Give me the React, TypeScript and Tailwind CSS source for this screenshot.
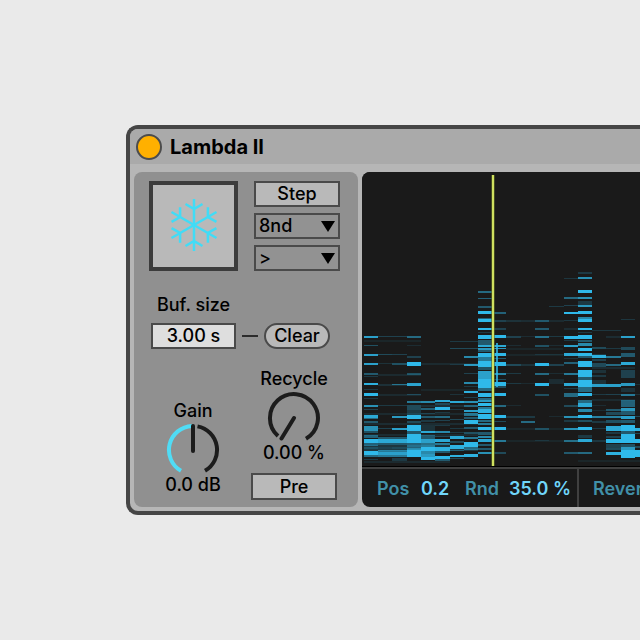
import type { ReactNode } from "react";

/* Left edges of the analysis frames, one per spectrogram column. */
const COLS = [364, 378, 392, 407, 421, 435, 450, 464, 478, 492, 506, 521, 535, 549, 564, 578, 592, 606, 621, 635, 650];

/* Per column: [top, height, intensity] */
type Bin = [number, number, number];
const BINS: Bin[][] = [
  [[336, 2, 0.85], [345, 1, 0.35], [354, 2, 0.85], [363, 2, 0.85], [373, 2, 0.4], [376, 1, 0.2], [383, 2, 0.95], [389, 1, 0.2], [393, 3, 1], [398, 1, 0.2], [405, 2, 0.75], [409, 1, 0.25], [415, 3, 0.9], [418, 1, 0.5], [421, 2, 0.4], [426, 5, 0.75], [431, 2, 0.35], [435, 3, 0.45], [439, 4, 1], [443, 3, 0.45], [447, 2, 0.35], [451, 4, 1], [455, 2, 0.5], [459, 1, 0.2]],
  [[336, 1, 0.25], [354, 1, 0.3], [363, 1, 0.15], [405, 1, 0.2], [428, 1, 0.25], [437, 2, 0.4], [439, 4, 0.9], [443, 2, 0.4], [447, 2, 0.25], [450, 2, 0.6], [452, 3, 0.85], [455, 2, 0.6]],
  [[336, 1, 0.25], [354, 1, 0.25], [363, 2, 0.35], [384, 1, 0.5], [405, 1, 0.2], [416, 2, 0.8], [428, 2, 0.85], [437, 2, 0.4], [439, 4, 0.9], [443, 2, 0.4], [447, 2, 0.3], [450, 2, 0.6], [452, 3, 0.85], [455, 2, 0.6], [458, 3, 0.2]],
  [[336, 2, 0.5], [345, 1, 0.12], [356, 2, 0.25], [362, 4, 1], [373, 2, 0.35], [383, 3, 0.85], [394, 1, 0.25], [401, 2, 0.6], [405, 5, 0.3], [410, 5, 0.2], [415, 4, 1], [421, 2, 0.3], [425, 6, 1], [431, 3, 0.4], [434, 9, 1], [443, 5, 0.45], [448, 2, 0.7], [450, 7, 1]],
  [[401, 2, 0.7], [408, 2, 0.45], [413, 1, 0.2], [416, 2, 0.4], [420, 2, 0.2], [425, 6, 0.15], [431, 2, 0.9], [435, 4, 0.4], [439, 4, 0.85], [443, 4, 0.55], [447, 4, 1], [451, 3, 0.7], [454, 3, 0.8], [457, 3, 1]],
  [[400, 2, 0.9], [403, 2, 0.3], [407, 3, 1], [412, 1, 0.2], [416, 2, 0.5], [420, 1, 0.25], [425, 1, 0.2], [431, 2, 0.7], [436, 1, 0.3], [439, 3, 0.9], [443, 2, 0.6], [447, 4, 0.95], [451, 2, 0.4], [456, 3, 1], [459, 2, 0.4]],
  [[341, 1, 0.2], [348, 1, 0.3], [364, 1, 0.12], [394, 1, 0.15], [401, 2, 0.9], [409, 1, 0.2], [419, 1, 0.3], [428, 1, 0.2], [432, 1, 0.2], [436, 3, 0.9], [441, 2, 0.3], [445, 4, 0.95], [450, 1, 0.3], [455, 2, 0.95], [458, 1, 0.3]],
  [[341, 1, 0.2], [348, 1, 0.3], [356, 2, 0.7], [364, 2, 0.8], [373, 1, 0.25], [382, 2, 0.7], [386, 1, 0.2], [391, 2, 0.95], [397, 1, 0.25], [401, 2, 0.75], [405, 2, 0.4], [410, 2, 0.85], [413, 3, 0.55], [417, 2, 0.4], [420, 4, 1], [427, 2, 0.4], [432, 2, 0.35], [437, 2, 0.6], [442, 5, 1], [447, 3, 0.5], [454, 3, 0.95]],
  [[291, 2, 0.5], [298, 1, 0.45], [306, 2, 0.4], [311, 3, 1], [318, 1, 0.45], [319, 3, 1], [328, 2, 1], [332, 1, 0.2], [335, 4, 1], [340, 5, 0.4], [345, 2, 0.9], [348, 2, 0.8], [350, 2, 0.4], [353, 4, 1], [357, 4, 0.6], [361, 6, 1], [367, 3, 0.35], [371, 8, 0.85], [379, 9, 1], [388, 3, 0.5], [393, 4, 1], [398, 2, 0.5], [400, 2, 0.8], [403, 3, 1], [407, 2, 0.6], [409, 4, 0.95], [414, 5, 1], [420, 2, 0.5], [423, 2, 0.6], [427, 3, 1], [432, 3, 0.4], [436, 2, 0.7], [439, 3, 0.9], [444, 2, 0.4], [448, 2, 0.4], [452, 2, 0.75]],
  [[312, 2, 0.45], [320, 2, 0.25], [328, 2, 0.25], [335, 3, 1], [345, 2, 0.9], [348, 1, 0.8], [353, 3, 1], [358, 1, 0.4], [362, 4, 1], [373, 2, 0.7], [379, 1, 0.3], [382, 4, 1], [386, 2, 0.3], [393, 3, 1], [405, 2, 0.5], [415, 3, 1], [421, 1, 0.3], [427, 3, 1], [440, 2, 0.6], [452, 2, 0.3]],
  [[320, 2, 0.15], [336, 2, 0.25], [345, 1, 0.12], [364, 2, 0.3], [373, 1, 0.2], [383, 1, 0.2], [405, 1, 0.1], [416, 2, 0.2]],
  [[320, 2, 0.12], [336, 1, 0.12], [364, 2, 0.15], [383, 1, 0.1], [416, 2, 0.2], [421, 2, 0.5]],
  [[320, 2, 0.4], [328, 2, 0.4], [336, 2, 0.55], [345, 2, 0.35], [354, 1, 0.12], [363, 3, 1], [373, 2, 0.5], [383, 3, 1], [394, 2, 0.35], [428, 2, 0.3], [440, 1, 0.12]],
  [[306, 1, 0.2], [320, 2, 0.1], [336, 1, 0.2], [345, 1, 0.12], [354, 1, 0.1], [364, 2, 0.25], [373, 1, 0.12], [379, 5, 0.12], [416, 1, 0.1]],
  [[278, 1, 0.18], [297, 2, 0.5], [305, 1, 0.25], [312, 2, 1], [320, 1, 0.18], [328, 2, 0.12], [336, 3, 1], [340, 1, 0.2], [345, 2, 0.85], [353, 3, 0.9], [358, 1, 0.15], [362, 2, 0.45], [373, 2, 0.6], [383, 3, 0.9], [388, 1, 0.2], [393, 4, 0.5], [405, 2, 0.3], [416, 2, 0.75], [420, 2, 0.2], [428, 2, 0.75], [440, 2, 0.5], [452, 2, 0.4]],
  [[272, 2, 0.2], [277, 2, 0.75], [290, 3, 1], [297, 2, 0.75], [301, 4, 0.2], [305, 2, 0.8], [311, 3, 1], [317, 2, 0.7], [319, 3, 1], [328, 2, 1], [332, 1, 0.2], [335, 4, 1], [340, 2, 0.4], [343, 3, 0.7], [348, 3, 1], [353, 3, 1], [356, 2, 0.4], [361, 6, 1], [370, 7, 1], [377, 3, 0.4], [380, 7, 1], [387, 5, 0.5], [393, 3, 1], [400, 3, 0.5], [403, 4, 0.9], [409, 3, 0.7], [415, 3, 1], [420, 2, 0.35], [427, 3, 1], [435, 3, 0.2], [439, 3, 0.9], [452, 2, 0.5]],
  [[330, 1, 0.18], [347, 2, 0.3], [354, 1, 0.18], [355, 3, 0.95], [359, 2, 0.25], [363, 4, 0.3], [370, 3, 0.15], [375, 2, 0.2], [380, 4, 0.15], [384, 3, 0.85], [394, 1, 0.2], [405, 1, 0.12], [410, 1, 0.12], [416, 2, 0.65], [421, 2, 0.2], [428, 1, 0.2]],
  [[330, 1, 0.18], [336, 2, 0.12], [348, 1, 0.2], [356, 2, 0.6], [364, 2, 0.5], [384, 3, 0.85], [394, 1, 0.25], [409, 2, 0.4], [412, 3, 0.3], [416, 2, 0.65], [420, 3, 0.35], [426, 5, 0.9], [432, 2, 0.2], [436, 2, 0.25], [439, 4, 1], [444, 4, 0.25], [448, 2, 0.3], [452, 3, 0.95]],
  [[319, 1, 0.18], [336, 2, 0.85], [347, 3, 0.3], [353, 4, 0.4], [362, 3, 0.9], [370, 8, 0.25], [383, 3, 0.8], [388, 4, 0.15], [394, 2, 0.6], [400, 7, 0.45], [408, 3, 0.8], [411, 4, 0.4], [416, 3, 0.85], [420, 3, 0.4], [425, 6, 1], [431, 3, 0.4], [434, 9, 1], [444, 3, 0.35], [447, 3, 0.8], [450, 8, 1]],
  [[384, 1, 0.15], [394, 1, 0.15], [416, 1, 0.3], [428, 3, 0.95], [433, 1, 0.3], [439, 4, 1], [446, 2, 0.3], [450, 7, 1]],
];

/* Faint residual energy that runs across several frames: [left, top, width, intensity] */
const RESIDUE: [number, number, number, number][] = [
  [364, 340, 57, 0.08], [378, 374, 43, 0.1], [378, 384, 43, 0.14], [378, 394, 43, 0.1],
  [364, 413, 114, 0.1], [364, 423, 114, 0.12], [364, 434, 114, 0.12], [364, 445, 114, 0.18],
  [364, 449, 114, 0.2], [364, 461, 86, 0.1], [421, 363, 57, 0.1], [421, 389, 57, 0.08],
  [421, 405, 57, 0.14], [506, 348, 57, 0.08], [506, 354, 57, 0.08], [506, 428, 72, 0.08],
  [506, 440, 72, 0.08], [592, 367, 43, 0.12], [592, 399, 43, 0.1], [592, 440, 14, 0.18], [578, 460, 62, 0.08],
];

function Spectrogram() {
  return (
    <svg viewBox="362 172 278 295" preserveAspectRatio="xMinYMin slice" className="block h-[295px] w-full bg-[#1a1a1a]" role="img" aria-label="Spectrogram">
      {RESIDUE.map(([x, y, w, o]) => (
        <rect key={`${x}-${y}`} x={x} y={y} width={w} height="2" fill="#2fb9ea" opacity={o} />
      ))}
      {BINS.map((bins, c) =>
        bins.map(([y, h, o]) => (
          <rect key={`${c}-${y}`} x={COLS[c]} y={y} width={COLS[c + 1] - COLS[c]} height={h} fill="#2fb9ea" opacity={o} />
        ))
      )}
      <rect x="496" y="343" width="2" height="44" fill="#2fb9ea" opacity="0.8" />
      <rect x="491" y="175" width="4" height="291" fill="#606a25" opacity="0.6" />
      <rect x="492" y="175" width="2" height="291" fill="#cfe160" />
      <rect x="362" y="466" width="278" height="1" fill="#000" />
    </svg>
  );
}

function Snowflake() {
  return (
    <svg width="48" height="54" viewBox="-24 -26 48 54" fill="none" stroke="#41dcf6" strokeWidth="2.500" aria-hidden="true">
      {[0, 60, 120, 180, 240, 300].map((a) => (
        <path key={a} transform={`rotate(${a})`} d="M0 0V-26M-8.500 -21L0 -16L8.500 -21" />
      ))}
    </svg>
  );
}

function Knob({ id, label, value, children }: { id: string; label: string; value: string; children: ReactNode }) {
  return (
    <div className="flex flex-col items-center">
      <label htmlFor={id} className="h-6 leading-6">{label}</label>
      <div className="relative h-[50px] w-[54px]">
        <svg width="54" height="50" viewBox="0 0 54 50" fill="none" strokeWidth="4" stroke="#1c1c1c" aria-hidden="true">
          {children}
        </svg>
        <input id={id} type="range" className="absolute inset-0 h-full w-full opacity-0" />
      </div>
      <output htmlFor={id} className="h-6 whitespace-nowrap leading-6">{value}</output>
    </div>
  );
}

function Menu({ label, options }: { label: string; options: string[] }) {
  return (
    <div className="relative">
      <select aria-label={label} className="block h-[26px] w-full appearance-none border-2 border-[#4a4a4a] bg-[#929292] pl-[3px] leading-5">
        {options.map((o) => <option key={o}>{o}</option>)}
      </select>
      <svg width="14" height="11" viewBox="0 0 14 11" className="pointer-events-none absolute right-[5px] top-2" aria-hidden="true">
        <path d="M0 0H14L7 11Z" fill="#000" />
      </svg>
    </div>
  );
}

function Field({ id, label, value, width }: { id: string; label: string; value: string; width: string }) {
  return (
    <div className="flex items-center gap-2">
      <label htmlFor={id} className="w-9 text-[#4190a8]">{label}</label>
      <input id={id} defaultValue={value} className={`${width} bg-transparent text-[#70d6fa]`} />
    </div>
  );
}

export default function App() {
  return (
    <main className="min-h-screen overflow-hidden bg-[#eaeaea] pl-[126px] pt-[125px] font-['Inter',sans-serif] text-lg font-medium text-black">
      <section className="overflow-hidden rounded-l-[12px] border-4 border-r-0 border-[#464646] bg-[#b6b6b6]">
        <header className="flex h-[35px] items-center gap-2 bg-[#aaaaaa] pl-[6px]">
          <button aria-label="Device on" className="size-[26px] rounded-full border-2 border-[#4c4c4c] bg-[#ffb000]" />
          <h1 className="text-xl font-bold">Lambda II</h1>
        </header>

        <div className="flex gap-1 pb-1 pl-1 pt-2">
          <div className="w-[224px] shrink-0 rounded-[8px] bg-[#909090] px-[15px] pb-[7px] pt-[9px]">
            <div className="flex gap-4">
              <button aria-label="Freeze" className="flex h-[90px] w-[89px] items-center justify-center border-4 border-[#3c3c3c] bg-[#b9b9b9]">
                <Snowflake />
              </button>
              <div className="flex w-[86px] flex-col gap-[6px]">
                <button className="h-[26px] border-2 border-[#4a4a4a] bg-[#b9b9b9] leading-5">Step</button>
                <Menu label="Step length" options={["8nd"]} />
                <Menu label="Direction" options={[">"]} />
              </div>
            </div>

            <label htmlFor="buffer" className="mt-[22px] block w-[89px] text-center leading-6">Buf. size</label>
            <div className="mt-[6px] flex items-center gap-[6px] pl-[2px]">
              <input id="buffer" defaultValue="3.00 s" className="h-[26px] w-[85px] border-2 border-[#4a4a4a] bg-[#dedede] text-center" />
              <span className="h-[2px] w-4 bg-[#2c2c2c]" />
              <button className="h-[26px] w-[66px] rounded-full border-2 border-[#4a4a4a] bg-[#b9b9b9] leading-5">Clear</button>
            </div>

            <div className="mt-[18px] flex gap-4">
              <div className="w-[88px] pt-8">
                <Knob id="gain" label="Gain" value="0.0 dB">
                  <path d="M15 47.800A24 24 0 0 1 26 3" stroke="#50dcf5" />
                  <path d="M31.500 3.400A24 24 0 0 1 39 47.800" />
                  <path d="M27 3V28" strokeLinecap="round" />
                </Knob>
              </div>
              <div className="flex w-[82px] flex-col items-center gap-2">
                <Knob id="recycle" label="Recycle" value="0.00 %">
                  <path d="M11 45A24 24 0 1 1 39 47.800" />
                  <path d="M27 27L14.500 47.500" strokeLinecap="round" />
                </Knob>
                <button className="h-[27px] w-[86px] border-2 border-[#4a4a4a] bg-[#b9b9b9] leading-5">Pre</button>
              </div>
            </div>
          </div>

          <div className="min-w-0 flex-1 overflow-hidden rounded-l-[8px] bg-[#191919]">
            <Spectrogram />
            <div className="flex h-10 overflow-hidden border-t-2 border-[#404040] font-semibold">
              <div className="flex w-[217px] shrink-0 items-center gap-2 border-r-2 border-[#404040] pl-[15px] pt-[2px]">
                <Field id="pos" label="Pos" value="0.2" width="w-9" />
                <Field id="rnd" label="Rnd" value="35.0 %" width="w-16" />
              </div>
              <div className="flex shrink-0 items-center pl-[14px] pt-[2px] text-[#4190a8]">Reverse</div>
            </div>
          </div>
        </div>
      </section>
    </main>
  );
}
